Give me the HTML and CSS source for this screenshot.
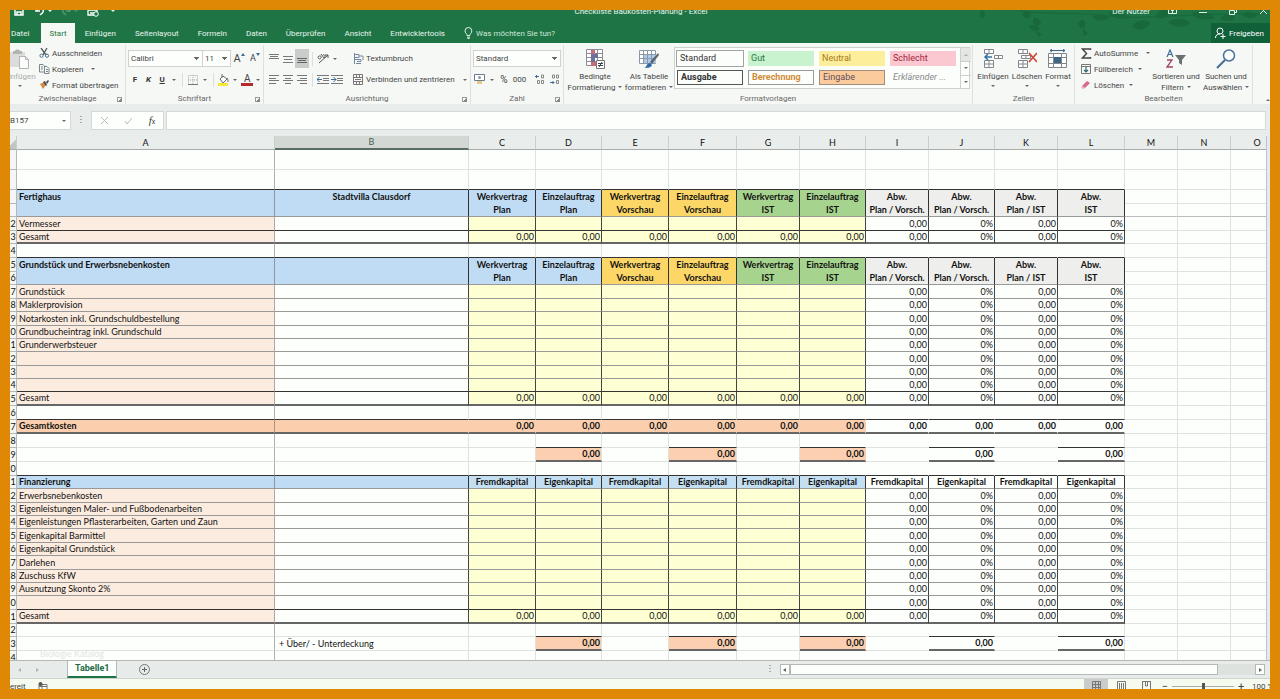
FILE: index.html
```html
<!DOCTYPE html>
<html lang="de">
<head>
<meta charset="utf-8">
<title>Checkliste Baukosten-Planung - Excel</title>
<link rel="stylesheet" href="styles.css">
</head>
<body>
<div class="app">
  <header class="top">
    <svg class="leaves" viewBox="0 0 290 33" fill="#17633a" aria-hidden="true">
      <path d="M2 0c4 2 4 9-1 8-3-2-2-6 1-8zM42 4c5-5 11 0 8 3-4 2-7 1-8-3zM54 8c6-1 9 5 5 7s-8-3-5-7zM49 16c6-3 12 1 10 4-4 3-9 0-10-4zM56 20l6 5-4 2zM98 14c3-7 8-4 7 1s-5 4-7-1zM103 18l5 6-5 2zM112 7c6-4 15-3 18 0-5 4-13 5-18 0zM128 2c8-2 18 2 22 6-9 2-20 0-22-6zM152 16c4-6 14-7 18-3-3 6-12 10-18 3zM176 6c3-7 10-7 13-4-1 6-8 9-13 4zM188 12c6-5 18-4 22 1-6 5-17 5-22-1zM212 3c9-3 20 0 23 5-8 3-20 2-23-5zM240 8c5-5 12-4 15 0-4 4-11 4-15 0zM262 4c6-3 12-2 15 2-5 3-12 3-15-2z"/>
      <path d="M40 1c30 4 60 1 90 5s80-3 150-2" fill="none" stroke="#17633a"/>
    </svg>
    <div class="titlebar">
      <div class="quick">
        <button aria-label="Speichern"><svg width="10" height="10" viewBox="0 0 10 10"><path d="M1 0v9h8V0M3 9V6h4v3" fill="none" stroke="#fff" stroke-width="1.5"/></svg></button>
        <button aria-label="Rückgängig"><svg width="10" height="10" viewBox="0 0 10 10"><path d="M1 1v4h4M1 5c4-5 8-2 7 1-1 2-2 2-3 3" fill="none" stroke="#fff" stroke-width="1.5"/></svg></button><i class="caret"></i>
        <button aria-label="Wiederholen" class="dim"><svg width="10" height="10" viewBox="0 0 10 10"><path d="M9 1v4H5M9 5C5 0 1 3 2 6c1 2 2 2 3 3" fill="none" stroke="#fff" stroke-width="1.5"/></svg></button><i class="caret dim"></i>
        <button aria-label="Drucken"><svg width="12" height="11" viewBox="0 0 12 11"><path d="M3 4V1h6v3M1 4h9v5H1zM3 7h4" fill="none" stroke="#fff" stroke-width="1.3"/><circle cx="9" cy="8" r="2.3" fill="#1e7444" stroke="#fff"/></svg></button><i class="caret wide"></i>
      </div>
      <div class="title">Checkliste Baukosten-Planung - Excel</div>
      <div class="wincontrols">
        <span>Der Nutzer</span>
        <button aria-label="Menübandanzeige"><svg width="9" height="9" viewBox="0 0 9 9"><path d="M.5.5h8v6h-8zM4.500 6V3M3 4l1.500-1.500L6 4" fill="none" stroke="#e4f2e9"/></svg></button>
        <button aria-label="Minimieren"><svg width="8" height="9" viewBox="0 0 8 9"><path d="M0 5.500h8" stroke="#e4f2e9"/></svg></button>
        <button aria-label="Verkleinern"><svg width="8" height="9" viewBox="0 0 8 9"><path d="M.5 3.500h5v4h-5zM2.500 3V1.500h5v4H6" fill="none" stroke="#e4f2e9"/></svg></button>
        <button aria-label="Schließen"><svg width="9" height="9" viewBox="0 0 9 9"><path d="M1 0l7 7M8 0L1 7" stroke="#e4f2e9"/></svg></button>
      </div>
    </div>
    <nav class="tabs">
      <button class="t-file">Datei</button><button class="active">Start</button><button>Einfügen</button><button>Seitenlayout</button><button>Formeln</button><button>Daten</button><button>Überprüfen</button><button>Ansicht</button><button>Entwicklertools</button>
      <button class="tell"><svg width="9" height="12" viewBox="0 0 9 12"><path d="M3 8.500C3 7 1 6 1 3.900a3.400 3.400 0 0 1 6.800 0C7.800 6 5.800 7 5.800 8.500zM3 10.200h3M3.500 11.500h2" fill="none" stroke="#e4f2e9"/></svg>Was möchten Sie tun?</button>
      <button class="share"><svg width="11" height="12" viewBox="0 0 11 12"><circle cx="5" cy="4" r="3" fill="none" stroke="#fff"/><path d="M.5 11c0-3 2-4 4.500-4M8 7v5M5.500 9.500h5" fill="none" stroke="#fff"/></svg>Freigeben</button>
    </nav>
  </header>

  <div class="ribbon">
    <section class="group g-clip">
      <div class="body">
        <button class="big paste" disabled><svg width="22" height="20" viewBox="0 0 22 20"><path d="M1 3h15v15H1z" fill="#dcdcdc"/><path d="M4 2h2c0-2 5-2 5 0h2v3H4z" fill="#b3b3b3"/><path d="M10.500 7.500h6l3 3v9h-9z" fill="#fcfcfc" stroke="#b3b3b3"/><path d="M16.500 7.500v3h3" fill="none" stroke="#b3b3b3"/></svg><span>Einfügen</span><i class="caret"></i></button>
        <div class="stack">
          <button><svg width="11" height="10" viewBox="0 0 11 10"><path d="M2 0l5 7M8 0L4 7" stroke="#505a5a" stroke-width="1.300"/><circle cx="2.500" cy="7.700" r="1.600" fill="none" stroke="#4a7090"/><circle cx="8" cy="7.700" r="1.600" fill="none" stroke="#4a7090"/></svg>Ausschneiden</button>
          <button><svg width="11" height="10" viewBox="0 0 11 10"><path d="M.5.5H4l1.500 1.500v6h-5zM5.500 2.500H8l2 2v5H5.500zM2 3h2M2 5h2M7 5.500h2M7 7.500h2" fill="none" stroke="#7b858a"/></svg>Kopieren<i class="caret far"></i></button>
          <button><svg width="11" height="10" viewBox="0 0 11 10"><path d="M1 4l4-2 2 3-3 4z" fill="#d8893f"/><path d="M4 2l3 4 1-1L6 1zM7 2l2-2 1 1-2 3z" fill="#4b4b4b"/></svg>Format übertragen</button>
        </div>
      </div>
      <div class="foot">Zwischenablage<i class="launch"></i></div>
    </section>

    <section class="group g-font">
      <div class="body rows">
        <div class="line">
          <select class="s-font" aria-label="Schriftart"><option>Calibri</option></select><select class="s-size" aria-label="Schriftgrad"><option>11</option></select>
          <button class="grow" aria-label="Schrift vergrößern">A<svg width="4" height="4" viewBox="0 0 4 4"><path d="M0 3l2-3 2 3z" fill="#3d6b94"/></svg></button><button class="grow small" aria-label="Schrift verkleinern">A<svg width="4" height="4" viewBox="0 0 4 4"><path d="M0 0l2 3 2-3z" fill="#3d6b94"/></svg></button>
        </div>
        <div class="line">
          <button class="glyph">F</button><button class="glyph"><em>K</em></button><button class="glyph"><u>U</u></button><i class="caret"></i><i class="sep"></i>
          <button class="w16" aria-label="Rahmen"><svg width="10" height="10" viewBox="0 0 10 10"><path d="M.5.5h9v9h-9zM5 0v10M0 5h10" fill="none" stroke="#a3a9a9" stroke-dasharray="1 1"/><path d="M0 9.500h10" stroke="#777"/></svg></button><i class="caret"></i><i class="sep"></i>
          <button class="w16" aria-label="Füllfarbe"><svg width="11" height="12" viewBox="0 0 11 12"><path d="M2 5l3-3 4 3-4 4z" fill="#fff" stroke="#6d6d6d"/><path d="M4 0v4M9 4c1 1 1 3 1 4" fill="none" stroke="#6d6d6d"/><path d="M0 9h10v3H0z" fill="#f5e53c"/></svg></button><i class="caret"></i>
          <button class="fontcolor" aria-label="Schriftfarbe">A</button><i class="caret"></i>
        </div>
      </div>
      <div class="foot">Schriftart<i class="launch"></i></div>
    </section>

    <section class="group g-align">
      <div class="body rows">
        <div class="line">
          <button class="w14" aria-label="Oben ausrichten"><svg width="10" height="10" viewBox="0 0 10 10"><path d="M0 .5h10M1 2.500h8M0 4.500h10" stroke="#777"/></svg></button><button class="w14" aria-label="Zentriert ausrichten"><svg width="10" height="10" viewBox="0 0 10 10"><path d="M0 2.500h10M1 5.500h8M0 8.500h10" stroke="#777"/></svg></button><button class="w14 on" aria-label="Unten ausrichten"><svg width="10" height="10" viewBox="0 0 10 10"><path d="M0 4.500h10M1 6.500h8M0 8.500h10" stroke="#666"/></svg></button><i class="sep"></i>
          <button class="w14" aria-label="Ausrichtung"><svg width="12" height="11" viewBox="0 0 12 11"><path d="M2 10l9-8M8 2h3v3M1 4c1-2 4-1 3 1S1 6 1 4zM4 1l3 4c2-1 1-4-1-3" fill="none" stroke="#555"/></svg></button><i class="caret"></i>
          <button class="labelled first"><svg width="11" height="11" viewBox="0 0 11 11"><path d="M1.500 0v11M1 1.500h5v3H1M1 6.500h7v2H4M3 10.500h5" fill="none" stroke="#7786a0"/><path d="M6 3h4v4" fill="none" stroke="#7786a0"/></svg>Textumbruch</button>
        </div>
        <div class="line">
          <button class="w14" aria-label="Linksbündig"><svg width="10" height="9" viewBox="0 0 10 9"><path d="M0 .5h10M0 3.500h7M0 5.500h10M0 8.500h7" stroke="#777"/></svg></button><button class="w14" aria-label="Zentriert"><svg width="10" height="9" viewBox="0 0 10 9"><path d="M0 .5h10M2 3.500h6M0 5.500h10M2 8.500h6" stroke="#777"/></svg></button><button class="w14" aria-label="Rechtsbündig"><svg width="10" height="9" viewBox="0 0 10 9"><path d="M0 .5h10M3 3.500h7M0 5.500h10M3 8.500h7" stroke="#777"/></svg></button><i class="sep"></i>
          <button class="w14" aria-label="Einzug verkleinern"><svg width="12" height="9" viewBox="0 0 12 9"><path d="M0 .5h12M6 3.500h6M6 5.500h6M0 8.500h12" stroke="#777"/><path d="M0 4.500h5M2.500 2L0 4.500 2.500 7" fill="none" stroke="#3d6b94"/></svg></button><button class="w14" aria-label="Einzug vergrößern"><svg width="12" height="9" viewBox="0 0 12 9"><path d="M0 .5h12M6 3.500h6M6 5.500h6M0 8.500h12" stroke="#777"/><path d="M0 4.500h5M2.500 2L5 4.500 2.500 7" fill="none" stroke="#3d6b94"/></svg></button>
          <button class="labelled"><svg width="11" height="11" viewBox="0 0 11 11"><path d="M.5.5h9v10h-9zM0 3.500h10M0 7.500h10M3.500 0v3M6.500 0v3M3.500 8v3M6.500 8v3M2 5.500h6" fill="none" stroke="#777"/></svg>Verbinden und zentrieren<i class="caret"></i></button>
        </div>
      </div>
      <div class="foot">Ausrichtung<i class="launch"></i></div>
    </section>

    <section class="group g-num">
      <div class="body rows">
        <div class="line"><select class="s-num" aria-label="Zahlenformat"><option>Standard</option></select></div>
        <div class="line">
          <button class="w16" aria-label="Buchhaltung"><svg width="12" height="11" viewBox="0 0 12 11"><path d="M.5.500h10v6H.5z" fill="#fff" stroke="#6d7b8c"/><circle cx="5.500" cy="3.500" r="1.500" fill="#8c99aa"/><path d="M3 7h5v3H3z" fill="#e8c98a"/></svg></button><i class="caret"></i>
          <button class="num pct">%</button><button class="num">000</button>
          <button class="w16 end" aria-label="Dezimalstelle hinzufügen"><svg width="10" height="11" viewBox="0 0 10 11"><path d="M4 2.500H0M2 1L.5 2.500 2 4" fill="none" stroke="#3d6b94"/><path d="M6.500 1h2v3h-2zM2.500 6.500h2v3h-2zM6.500 6.500h2v3h-2z" fill="none" stroke="#888"/></svg></button><button class="w16" aria-label="Dezimalstelle entfernen"><svg width="10" height="11" viewBox="0 0 10 11"><path d="M0 8.500h4M2.500 7L4 8.500 2.500 10" fill="none" stroke="#3d6b94"/><path d="M6.500 6.500h2v3h-2zM2.500 1h2v3h-2zM6.500 1h2v3h-2z" fill="none" stroke="#888"/></svg></button>
        </div>
      </div>
      <div class="foot">Zahl<i class="launch"></i></div>
    </section>

    <section class="group g-style">
      <div class="body">
        <button class="big w58"><svg width="20" height="20" viewBox="0 0 20 20"><path d="M1.500.5h16v16h-16zM1 4.500h17M1 8.500h17M1 12.500h17M6.500 0v17M12.500 0v17" fill="#fff" stroke="#8b8b93"/><path d="M6 1h4v4H6zM6 13h5v4H6z" fill="#c46c78"/><path d="M6 5h7v4H6zM6 9h4v4H6z" fill="#6d6f9c"/><path d="M11.500 11.500h8v8h-8z" fill="#fff" stroke="#777"/><path d="M13 14.500h5M13 16.500h5M17 13l-3 5" stroke="#444"/></svg><span>Bedingte<br>Formatierung<i class="caret"></i></span></button>
        <button class="big w50"><svg width="20" height="20" viewBox="0 0 20 20"><path d="M.5 1.500h16v13H.5z" fill="#fff" stroke="#8b98a8"/><path d="M5 5h12v9H5z" fill="#aecbe8"/><path d="M0 5.500h17M0 9.500h17M4.500 1v14M8.500 1v14M12.500 1v14" stroke="#8b98a8"/><path d="M19 4l1 2-7 9-2-2z" fill="#5d6670"/><path d="M5 19c3 0 2-5 6-5l2 2c-1 3-5 3-8 3z" fill="#2f6aa5"/></svg><span>Als Tabelle<br>formatieren<i class="caret"></i></span></button>
        <div class="gallery">
          <div class="swatches">
            <button class="st-standard">Standard</button><button class="st-good">Gut</button><button class="st-neutral">Neutral</button><button class="st-bad">Schlecht</button>
            <button class="st-output">Ausgabe</button><button class="st-calc">Berechnung</button><button class="st-input">Eingabe</button><button class="st-note">Erklärender ...</button>
          </div>
          <div class="spin"><button aria-label="Nach oben" class="off"><i class="caret up"></i></button><button aria-label="Nach unten"><i class="caret"></i></button><button aria-label="Weitere"><i class="caret bar"></i></button></div>
        </div>
      </div>
      <div class="foot">Formatvorlagen</div>
    </section>

    <section class="group g-cells">
      <div class="body">
        <button class="big w34"><svg width="20" height="20" viewBox="0 0 20 20"><path d="M1.500.5h9v4h-9zM6 0v5M11.500 6.500h8v3h-8zM15.500 6v4M1.500 11.500h9v7h-9zM6 11v8M1 15h10" fill="#fff" stroke="#81868c"/><path d="M9 8H2M5 5L2 8l3 3" fill="none" stroke="#3470a8" stroke-width="1.500"/></svg><span>Einfügen</span><i class="caret"></i></button>
        <button class="big w34"><svg width="20" height="20" viewBox="0 0 20 20"><path d="M1.500.5h9v4h-9zM6 0v5M4.500 6.500h9v3h-9zM9 6v4M1.500 11.500h9v7h-9zM6 11v8M1 15h10" fill="#fff" stroke="#81868c"/><path d="M12 4l8 9M20 4l-8 9" stroke="#cf4b3c" stroke-width="1.800"/></svg><span>Löschen</span><i class="caret"></i></button>
        <button class="big w28"><svg width="20" height="20" viewBox="0 0 20 20"><path d="M.5 4.500h18v14H.5zM5.500 4v15M13.500 4v15M0 8.500h19M0 14.500h19" fill="#fff" stroke="#81868c"/><path d="M6 8h7v6H6z" fill="#3f6685"/><path d="M2 1.500h15M4 0L2 1.500 4 3M15 0l2 1.500L15 3" fill="none" stroke="#3f6685"/></svg><span>Format</span><i class="caret"></i></button>
      </div>
      <div class="foot">Zellen</div>
    </section>

    <section class="group g-edit">
      <div class="body">
        <div class="stack">
          <button><svg width="11" height="11" viewBox="0 0 11 11"><path d="M9.500 2V1H1.500l4 4.500-4 4.500h8V9" fill="none" stroke="#444" stroke-width="1.500"/></svg>AutoSumme<i class="caret far"></i></button>
          <button><svg width="11" height="11" viewBox="0 0 11 11"><path d="M.5.5h9v9h-9zM0 2.500h10" fill="none" stroke="#777"/><path d="M5 3v5M3 6l2 2 2-2" fill="none" stroke="#2f6a70" stroke-width="1.200"/></svg>Füllbereich<i class="caret"></i></button>
          <button><svg width="11" height="10" viewBox="0 0 11 10"><path d="M1 6l5-5 3 2-5 5z" fill="#d9698c"/><path d="M1 6l3 2-1 1-3-1z" fill="#eab0c2"/></svg>Löschen<i class="caret"></i></button>
        </div>
        <button class="big w50"><svg width="20" height="20" viewBox="0 0 20 20"><path d="M1 8l3-7 3 7M2 5.500h4" fill="none" stroke="#3f6f9c" stroke-width="1.200"/><path d="M1 11h5l-5 7h6" fill="none" stroke="#a3476a" stroke-width="1.300"/><path d="M9 6h11l-4 5v5l-3-2v-3z" fill="#6b6f6f"/></svg><span>Sortieren und<br>Filtern<i class="caret"></i></span></button>
        <button class="big w50"><svg width="20" height="20" viewBox="0 0 20 20"><circle cx="13" cy="6.500" r="5.500" fill="#fbfdff" stroke="#4b7196" stroke-width="1.500"/><path d="M9 11l-8 8" stroke="#4b7196" stroke-width="2.200"/></svg><span>Suchen und<br>Auswählen<i class="caret"></i></span></button>
      </div>
      <div class="foot">Bearbeiten</div>
    </section>
    <div class="group tail"><i class="caret up"></i></div>
  </div>

  <div class="formulabar">
    <input class="namebox" aria-label="Namenfeld" value="B157"><i class="caret"></i>
    <span class="dots"></span>
    <div class="fx">
      <button aria-label="Abbrechen"><svg width="9" height="9" viewBox="0 0 9 9"><path d="M1 1l7 7M8 1L1 8" stroke="#bbb"/></svg></button>
      <button aria-label="Eingeben"><svg width="9" height="9" viewBox="0 0 9 9"><path d="M1 5l2 3 5-6" fill="none" stroke="#bbb"/></svg></button>
      <button aria-label="Funktion einfügen"><em>f</em><small>x</small></button>
    </div>
    <input class="formula" aria-label="Bearbeitungsleiste">
  </div>

  <main class="sheet">
    <table>
      <colgroup><col class="c-n"><col class="c-a"><col class="c-b"><col class="c67"><col class="c66"><col class="c67"><col class="c68"><col class="c63"><col class="c66"><col class="c63"><col class="c66"><col class="c63"><col class="c67"><col class="c53"><col class="c53"><col class="c53"></colgroup>
      <thead><tr><th class="corner"><th>A<th class="sel">B<th>C<th>D<th>E<th>F<th>G<th>H<th>I<th>J<th>K<th>L<th>M<th>N<th>O</thead>
      <tbody>
      <tr class="h20"><th><td><td><td><td><td><td><td><td><td><td><td><td><td><td><td>
      <tr class="h20"><th><td><td><td><td><td><td><td><td><td><td><td><td><td><td><td>
      <tr class="h14 head"><th><td rowspan="2">Fertighaus<td rowspan="2">Stadtvilla Clausdorf<td rowspan="2">Werkvertrag<br>Plan<td rowspan="2">Einzelauftrag<br>Plan<td rowspan="2">Werkvertrag<br>Vorschau<td rowspan="2">Einzelauftrag<br>Vorschau<td rowspan="2">Werkvertrag<br>IST<td rowspan="2">Einzelauftrag<br>IST<td rowspan="2">Abw.<br>Plan / Vorsch.<td rowspan="2">Abw.<br>Plan / Vorsch.<td rowspan="2">Abw.<br>Plan / IST<td rowspan="2">Abw.<br>IST<td><td><td>
      <tr class="h13 cont strong"><th><td><td><td>
      <tr class="h14 item"><th>2<td>Vermesser<td><td><td><td><td><td><td><td>0,00<td>0%<td>0,00<td>0%<td><td><td>
      <tr class="h13 item sum"><th>3<td>Gesamt<td><td>0,00<td>0,00<td>0,00<td>0,00<td>0,00<td>0,00<td>0,00<td>0%<td>0,00<td>0%<td><td><td>
      <tr class="h14 blank"><th>4<td><td><td><td><td><td><td><td><td><td><td><td><td><td><td>
      <tr class="h14 head"><th>5<td rowspan="2">Grundstück und Erwerbsnebenkosten<td rowspan="2"><td rowspan="2">Werkvertrag<br>Plan<td rowspan="2">Einzelauftrag<br>Plan<td rowspan="2">Werkvertrag<br>Vorschau<td rowspan="2">Einzelauftrag<br>Vorschau<td rowspan="2">Werkvertrag<br>IST<td rowspan="2">Einzelauftrag<br>IST<td rowspan="2">Abw.<br>Plan / Vorsch.<td rowspan="2">Abw.<br>Plan / Vorsch.<td rowspan="2">Abw.<br>Plan / IST<td rowspan="2">Abw.<br>IST<td><td><td>
      <tr class="h13 cont"><th>6<td><td><td>
      <tr class="h14 item"><th>7<td>Grundstück<td><td><td><td><td><td><td><td>0,00<td>0%<td>0,00<td>0%<td><td><td>
      <tr class="h13 item"><th>8<td>Maklerprovision<td><td><td><td><td><td><td><td>0,00<td>0%<td>0,00<td>0%<td><td><td>
      <tr class="h14 item"><th>9<td>Notarkosten inkl. Grundschuldbestellung<td><td><td><td><td><td><td><td>0,00<td>0%<td>0,00<td>0%<td><td><td>
      <tr class="h13 item"><th>0<td>Grundbucheintrag inkl. Grundschuld<td><td><td><td><td><td><td><td>0,00<td>0%<td>0,00<td>0%<td><td><td>
      <tr class="h13 item"><th>1<td>Grunderwerbsteuer<td><td><td><td><td><td><td><td>0,00<td>0%<td>0,00<td>0%<td><td><td>
      <tr class="h14 item"><th>2<td><td><td><td><td><td><td><td><td>0,00<td>0%<td>0,00<td>0%<td><td><td>
      <tr class="h13 item"><th>3<td><td><td><td><td><td><td><td><td>0,00<td>0%<td>0,00<td>0%<td><td><td>
      <tr class="h13 item"><th>4<td><td><td><td><td><td><td><td><td>0,00<td>0%<td>0,00<td>0%<td><td><td>
      <tr class="h14 item sum"><th>5<td>Gesamt<td><td>0,00<td>0,00<td>0,00<td>0,00<td>0,00<td>0,00<td>0,00<td>0%<td>0,00<td>0%<td><td><td>
      <tr class="h14 blank"><th>6<td><td><td><td><td><td><td><td><td><td><td><td><td><td><td>
      <tr class="h14 total"><th>7<td>Gesamtkosten<td><td>0,00<td>0,00<td>0,00<td>0,00<td>0,00<td>0,00<td>0,00<td>0,00<td>0,00<td>0,00<td><td><td>
      <tr class="h14 blank"><th>8<td><td><td><td><td><td><td><td><td><td><td><td><td><td><td>
      <tr class="h14 sub"><th>9<td><td><td><td>0,00<td><td>0,00<td><td>0,00<td><td>0,00<td><td>0,00<td><td><td>
      <tr class="h14 blank"><th>0<td><td><td><td><td><td><td><td><td><td><td><td><td><td><td>
      <tr class="h13 head fin"><th>1<td>Finanzierung<td><td>Fremdkapital<td>Eigenkapital<td>Fremdkapital<td>Eigenkapital<td>Fremdkapital<td>Eigenkapital<td>Fremdkapital<td>Eigenkapital<td>Fremdkapital<td>Eigenkapital<td><td><td>
      <tr class="h14 item"><th>2<td>Erwerbsnebenkosten<td><td><td><td><td><td><td><td>0,00<td>0%<td>0,00<td>0%<td><td><td>
      <tr class="h13 item"><th>3<td>Eigenleistungen Maler- und Fußbodenarbeiten<td><td><td><td><td><td><td><td>0,00<td>0%<td>0,00<td>0%<td><td><td>
      <tr class="h13 item"><th>4<td>Eigenleistungen Pflasterarbeiten, Garten und Zaun<td><td><td><td><td><td><td><td>0,00<td>0%<td>0,00<td>0%<td><td><td>
      <tr class="h14 item"><th>5<td>Eigenkapital Barmittel<td><td><td><td><td><td><td><td>0,00<td>0%<td>0,00<td>0%<td><td><td>
      <tr class="h13 item"><th>6<td>Eigenkapital Grundstück<td><td><td><td><td><td><td><td>0,00<td>0%<td>0,00<td>0%<td><td><td>
      <tr class="h14 item"><th>7<td>Darlehen<td><td><td><td><td><td><td><td>0,00<td>0%<td>0,00<td>0%<td><td><td>
      <tr class="h13 item"><th>8<td>Zuschuss KfW<td><td><td><td><td><td><td><td>0,00<td>0%<td>0,00<td>0%<td><td><td>
      <tr class="h13 item"><th>9<td>Ausnutzung Skonto 2%<td><td><td><td><td><td><td><td>0,00<td>0%<td>0,00<td>0%<td><td><td>
      <tr class="h14 item"><th>0<td><td><td><td><td><td><td><td><td>0,00<td>0%<td>0,00<td>0%<td><td><td>
      <tr class="h14 item sum"><th>1<td>Gesamt<td><td>0,00<td>0,00<td>0,00<td>0,00<td>0,00<td>0,00<td>0,00<td>0%<td>0,00<td>0%<td><td><td>
      <tr class="h13 blank"><th>2<td><td><td><td><td><td><td><td><td><td><td><td><td><td><td>
      <tr class="h14 sub"><th>3<td><td>+ Über/ - Unterdeckung<td><td>0,00<td><td>0,00<td><td>0,00<td><td>0,00<td><td>0,00<td><td><td>
      <tr class="h14 blank"><th>4<td><td><td><td><td><td><td><td><td><td><td><td><td><td><td>
      </tbody>
    </table>
    <div class="vscroll"></div>
    <span class="mark">Biologie Katalog</span>
  </main>

  <div class="sheetbar">
    <div class="nav"><i class="left"></i><i class="right"></i></div>
    <button class="sheettab">Tabelle1</button>
    <button class="add" aria-label="Neues Blatt"><svg width="11" height="11" viewBox="0 0 11 11"><circle cx="5.500" cy="5.500" r="5" fill="none" stroke="#777"/><path d="M5.500 3v5M3 5.500h5" stroke="#666"/></svg></button>
    <div class="hscroll"><span class="dots"></span><button aria-label="Nach links"><i class="left"></i></button><div class="track"><div class="thumb"></div></div><button aria-label="Nach rechts"><i class="right"></i></button></div>
  </div>

  <footer class="status">
    <span class="ready">Bereit</span>
    <svg width="10" height="8" viewBox="0 0 10 8"><path d="M1 2.500h8v5H1zM1 4.500h8M4 3v5" fill="none" stroke="#777"/><circle cx="2.500" cy="2" r="2" fill="#555"/></svg>
    <div class="views">
      <button class="on" aria-label="Normal"><svg width="9" height="9" viewBox="0 0 9 9"><path d="M.5.500h8v8h-8zM0 3.500h9M0 6.500h9M3.500 0v9M6.500 0v9" fill="none" stroke="#777"/></svg></button>
      <button aria-label="Seitenlayout"><svg width="9" height="9" viewBox="0 0 9 9"><path d="M.5.500h8v8h-8zM2.500 2v6M4.500 2v6M6.500 2v6" fill="none" stroke="#777"/></svg></button>
      <button aria-label="Umbruchvorschau"><svg width="9" height="9" viewBox="0 0 9 9"><path d="M.5 0v8.500h8V0M0 .5h9M3.500 0v5h2V0" fill="none" stroke="#777"/></svg></button>
    </div>
    <button class="zoom">−</button><input type="range" aria-label="Zoom" min="0" max="100" value="50"><button class="zoom">+</button><span class="pctval">100 %</span>
  </footer>
</div>
</body>
</html>
```
FILE: styles.css
```css
* { box-sizing: border-box; }
body {
  margin: 0;
  padding: 10px;
  height: 100vh;
  background: #df8806;
  font: 8px/11px Roboto, "Open Sans", sans-serif;
  color: #444;
}
button, input, select { font: inherit; color: inherit; border: 0; padding: 0; margin: 0; background: none; border-radius: 0; }
button { display: flex; align-items: center; justify-content: center; white-space: nowrap; }
svg { flex: none; display: block; }
.app { display: flex; flex-direction: column; height: 100%; overflow: hidden; background: #e8ecea; }

.caret { flex: none; display: inline-block; width: 0; height: 0; margin: 0 3px; border: 2px solid transparent; border-top-color: #666; border-bottom-width: 0; }
.caret.up { border-top-width: 0; border-bottom: 2px solid #aaa; }
.caret.far { margin-left: 8px; }
.caret.bar { box-shadow: 0 -3px 0 -1px #777; }

/* title and tabs */
.top { position: relative; background: #1e7444; color: #e9f5ee; flex: none; }
.leaves { position: absolute; right: 0; top: 0; width: 290px; height: 33px; opacity: .7; }
.titlebar { position: relative; display: flex; align-items: center; height: 22px; margin-top: -10px; }
.quick { display: flex; align-items: center; flex: 1; padding-left: 4px; }
.quick .caret { border-top-color: #e9f5ee; margin: 0 9px 0 3px; }
.quick button + button { margin-left: 11px; }
.quick .wide { margin-left: 12px; }
.dim { opacity: .25; }
.wincontrols { display: flex; flex: 1; align-items: center; justify-content: flex-end; gap: 22px; padding-right: 2px; }
.wincontrols span { margin-right: -4px; }
.tabs { position: relative; display: flex; gap: 1px; height: 21px; padding-top: 1px; }
.tabs button { padding: 0 9px; }
.tabs .t-file { padding: 0 11px 0 1px; }
.tabs .active { background: #f6f8f6; color: #1e7444; padding: 0 8px; }
.tabs .tell { gap: 3px; padding: 0 9px; color: #cfe6d8; }
.tabs .share { margin-left: auto; gap: 3px; padding: 0 6px 0 4px; background: #10603a; color: #fff; }

/* ribbon */
.ribbon { display: flex; flex: none; padding-top: 2px; background: #f6f8f6; }
.group { display: flex; flex-direction: column; flex: none; border-right: 1px solid #dde1de; }
.body { display: flex; height: 48px; }
.foot { display: flex; justify-content: center; position: relative; line-height: 11px; color: #666; }
.launch { position: absolute; right: 3px; top: 4px; width: 5px; height: 5px; border: solid #999; border-width: 1px 0 0 1px; background: linear-gradient(135deg, transparent 50%, #888 50%); }
.g-clip { width: 116px; }
.g-font { width: 138px; }
.g-align { width: 207px; }
.g-num { width: 93px; }
.g-style { width: 409px; }
.g-cells { width: 102px; }
.g-edit { width: 178px; }
.tail { flex: 1; border: 0; align-items: flex-end; justify-content: flex-end; padding-bottom: 3px; }
.tail .caret { margin: 0; border-bottom-color: #666; }
.big { flex-direction: column; justify-content: flex-start; padding-top: 4px; }
.big span { margin-top: 2px; text-align: center; line-height: 11px; }
.big > .caret { margin-top: 3px; }
.big span .caret { margin: 0 0 2px 3px; }
.paste { width: 36px; margin-left: -8px; color: #a9adaa; }
.w58 { width: 58px; }
.w50 { width: 50px; }
.w34 { width: 34px; }
.w28 { width: 28px; }
.stack { display: grid; grid-template-rows: repeat(3, 16px); justify-items: start; padding-left: 1px; }
.stack button { gap: 2px; }
.stack .far { margin-left: 6px; }
.stack .caret { margin-right: 0; }
.rows { flex-direction: column; padding: 3px 0 0 2px; }
.line { display: flex; align-items: center; height: 21px; }
.sep { width: 1px; height: 14px; margin: 0 3px; background: #dcdfdc; }
select { appearance: none; height: 17px; padding-left: 2px; border: 1px solid #cfd3d0; background: #fdfffd conic-gradient(from 315deg at 50% 100%, #666 90deg, transparent 0) no-repeat right 3px center / 5px 3px; }
.s-font { width: 75px; }
.s-size { width: 29px; margin-left: -1px; }
.s-num { width: 88px; }
.grow { width: 16px; font-size: 11px; align-items: center; }
.grow svg { margin-bottom: 7px; }
.grow.small { font-size: 9px; }
.glyph { width: 14px; font-weight: 700; color: #333; }
.w14 { width: 14px; height: 19px; }
.w16 { width: 14px; }
.on { background: #c9cccb; }
.fontcolor { width: 12px; font-size: 10px; line-height: 9px; border-bottom: 3px solid #b8292b; margin-left: 1px; }
.g-align .rows { padding-left: 3px; }
.labelled { gap: 2px; margin-left: 9px; }
.labelled .caret { margin: 0 0 0 6px; }
.labelled.first { margin-left: 13px; }
.num { width: 17px; }
.pct { font-size: 10px; width: 14px; }
.end { margin-left: 5px; }
.g-num .w16 + .w16 { margin-left: 1px; }

.g-style .body { padding-left: 2px; }
.gallery { display: flex; height: 42px; margin-top: 2px; border: 1px solid #cdd1ce; background: #fcfefc; }
.swatches { display: grid; grid-template-columns: repeat(4, 66px); gap: 4px 5px; padding: 3px 4px 3px 2px; font-size: 9px; }
.swatches button { justify-content: flex-start; padding-left: 3px; height: 15px; color: #333; }
.swatches .st-standard { outline: 1px solid #a0a4a2; }
.swatches .st-good { background: #c9f2cf; color: #2a7a3a; }
.swatches .st-neutral { background: #fdee9b; color: #a57b1c; }
.swatches .st-bad { background: #fbc8d1; color: #a3243a; }
.swatches .st-output { border: 1px solid #555; font-weight: 700; }
.swatches .st-calc { border: 1px solid #999; color: #d08c36; font-weight: 700; }
.swatches .st-input { border: 1px solid #a08d80; background: #fbcb9b; color: #5f5060; }
.swatches .st-note { color: #8a8a8a; font-style: italic; }
.spin { display: grid; grid-template-rows: repeat(3, 1fr); width: 9px; border-left: 1px solid #cdd1ce; }
.spin button + button { border-top: 1px solid #cdd1ce; }
.spin .off { background: #e4e6e4; }
.g-cells .body { padding-left: 3px; }
.g-edit .body { padding-left: 5px; }
.g-edit .stack { width: 71px; }

/* formula bar */
.formulabar { display: flex; flex: none; height: 19px; margin: 7px 0 6px; align-items: stretch; }
.formulabar > .caret { align-self: center; margin: 0 5px 0 -9px; }
.namebox { width: 62px; margin-left: -1px; border: 1px solid #d5d9d6; background: #fdfffd; }
.dots { width: 2px; height: 9px; align-self: center; margin: 0 9px; background: repeating-linear-gradient(#aaa 0 1px, transparent 1px 3px); }
.fx { display: flex; justify-content: space-around; width: 73px; background: #fdfffd; border: 1px solid #d5d9d6; }
.fx em { font-family: "Liberation Serif", serif; font-size: 11px; }
.fx small { font-size: 7px; margin-top: 3px; }
.formula { flex: 1; margin: 0 4px 0 2px; border: 1px solid #d5d9d6; background: #fdfffd; }

/* sheet */
.sheet { position: relative; display: flex; flex: 1; min-height: 0; overflow: hidden; background: #fdfffd; font: 9px/10px Lato, Roboto, sans-serif; color: #111; }
table { flex: none; width: 1274px; margin-right: -20px; table-layout: fixed; border-collapse: separate; border-spacing: 0; }
.c-n { width: 7px; }
.c-a { width: 258px; }
.c-b { width: 194px; }
.c53 { width: 53px; }
.c63 { width: 63px; }
.c66 { width: 66px; }
.c67 { width: 67px; }
.c68 { width: 68px; }
th { padding: 0; font-weight: 400; }
thead th { height: 14px; background: #e9edeb; border-right: 1px solid #cbcfcc; border-bottom: 1px solid #a9adaa; }
thead .sel { background: #d3d8d5; border-bottom: 2px solid #5a6e66; color: #3d5f50; }
thead .corner { background: linear-gradient(135deg, #e9edeb 50%, #c2c6c3 50%); }
td { padding: 0 1px; border: solid #dee3df; border-width: 0 1px 1px 0; text-align: right; white-space: nowrap; vertical-align: middle; }
tbody th { border: solid #b6bab7; border-width: 0 1px 1px 0; background: #f4f7f5; text-align: center; }
.h13 { height: 13px; }
.h14 { height: 14px; }
.h20 { height: 20px; }
tr > td:nth-child(2) { padding-left: 2px; text-align: left; border-right-color: #b0b0b0; }
.cont > td:nth-child(2) { border-right-color: #dee3df; }
.strong > td, .strong > td:nth-child(2) { border-bottom-color: #bbb; }

.head > td:nth-child(-n+13) { border-color: #333; border-bottom-color: #999; background: #c0dcf4; font-weight: 700; line-height: 13px; text-align: center; vertical-align: top; }
.head > td:nth-child(2) { text-align: left; border-right-color: #8a98a5; }
.head > td:nth-child(n+6):nth-child(-n+7) { background: #fcd768; }
.head > td:nth-child(n+8):nth-child(-n+9) { background: #a6d48e; }
.head > td:nth-child(n+10):nth-child(-n+13) { background: #eeeeec; }
.fin > td:nth-child(n+4):nth-child(-n+9) { background: #c4dff2; }
.fin > td:nth-child(n+10):nth-child(-n+13) { background: #fdfffd; }
.fin > td:nth-child(-n+13) { line-height: 12px; }

.item > td:nth-child(-n+13) { border-color: #444; border-bottom-color: #999; }
.item > td:nth-child(2) { background: #fcebdf; border-right-color: #b0a8a0; }
.item > td:nth-child(n+4):nth-child(-n+9) { background: #feffd2; }
tr:has(+ .head) > td:nth-child(-n+13),
tr:has(+ .sum) > td:nth-child(-n+13),
tr:has(+ .total) > td:nth-child(-n+13) { border-bottom-color: #333; }
.sum > td:nth-child(-n+13) { border-bottom: 2px solid #666; }
.total > td:nth-child(-n+13) { border-bottom: 2px solid #666; border-right-color: transparent; font-weight: 700; }
.total > td:nth-child(-n+9) { background: #fbcfae; }
.total > td:nth-child(2) { border-right-color: #b09580; }
.blank > td:nth-child(n+9):nth-child(-n+12), .sub > td:nth-child(n+9):nth-child(-n+12) { border-right-color: transparent; }
.sub > td { font-weight: 700; }
.sub > td:nth-child(3) { font-weight: 400; text-align: left; padding-left: 4px; }
tr:has(+ .sub) > td:nth-child(2n+5):nth-child(-n+13) { border-bottom-color: #333; }
.sub > td:nth-child(2n+5):nth-child(-n+13) { border-bottom: 2px solid #666; }
.sub > td:nth-child(2n+5):nth-child(-n+9) { background: #fbcfb0; }
.vscroll { position: absolute; right: 0; top: 0; bottom: 0; width: 4px; border-left: 1px solid #b9c4cc; background: #e3e9ee; }
.mark { position: absolute; left: 30px; bottom: 1px; color: #e2e5e2; }

/* sheet tabs */
.sheetbar { display: flex; flex: none; height: 19px; align-items: center; border-top: 1px solid #b5b9b6; border-bottom: 1px solid #d0d4d1; background: #e7ebe9; }
.nav { display: flex; gap: 15px; padding-left: 8px; width: 57px; opacity: .4; }
.left, .right { width: 0; height: 0; border: 2px solid transparent; border-left-width: 0; border-right: 3px solid #666; }
.right { border: 2px solid transparent; border-right-width: 0; border-left: 3px solid #666; }
.sheettab { align-self: flex-start; height: 17px; padding: 0 7px; border: 1px solid #b5b9b6; border-top: 0; border-bottom: 2px solid #1e7444; background: #fdfffd; color: #1e6b44; font-size: 9px; font-weight: 700; }
.add { margin-left: 22px; }
.hscroll { display: flex; flex: none; width: 40.5%; margin-left: auto; padding-right: 5px; align-items: stretch; height: 11px; }
.hscroll button { width: 10px; border: 1px solid #b5b9b6; background: #fdfffd; }
.track { flex: 1; background: #dde2df; }
.thumb { width: 92%; height: 100%; border: 1px solid #b5b9b6; background: #fdfffd; }

.status { display: flex; flex: none; align-items: flex-start; height: 10px; padding-top: 3px; overflow: hidden; background: #f6fbf0; }
.ready { width: 32px; margin-left: -5px; margin-right: 1px; line-height: 9px; }
.views { display: flex; gap: 1px; margin-left: auto; margin-top: -3px; }
.views button { width: 24px; height: 12px; }
.zoom { width: 14px; height: 8px; font-size: 11px; }
.status input { width: 62px; height: 8px; appearance: none; background: linear-gradient(#aaa, #aaa) no-repeat center / 100% 1px; }
.status input::-webkit-slider-thumb { appearance: none; width: 3px; height: 7px; background: #555; }
.pctval { width: 22px; padding-left: 4px; line-height: 9px; white-space: nowrap; }
```
